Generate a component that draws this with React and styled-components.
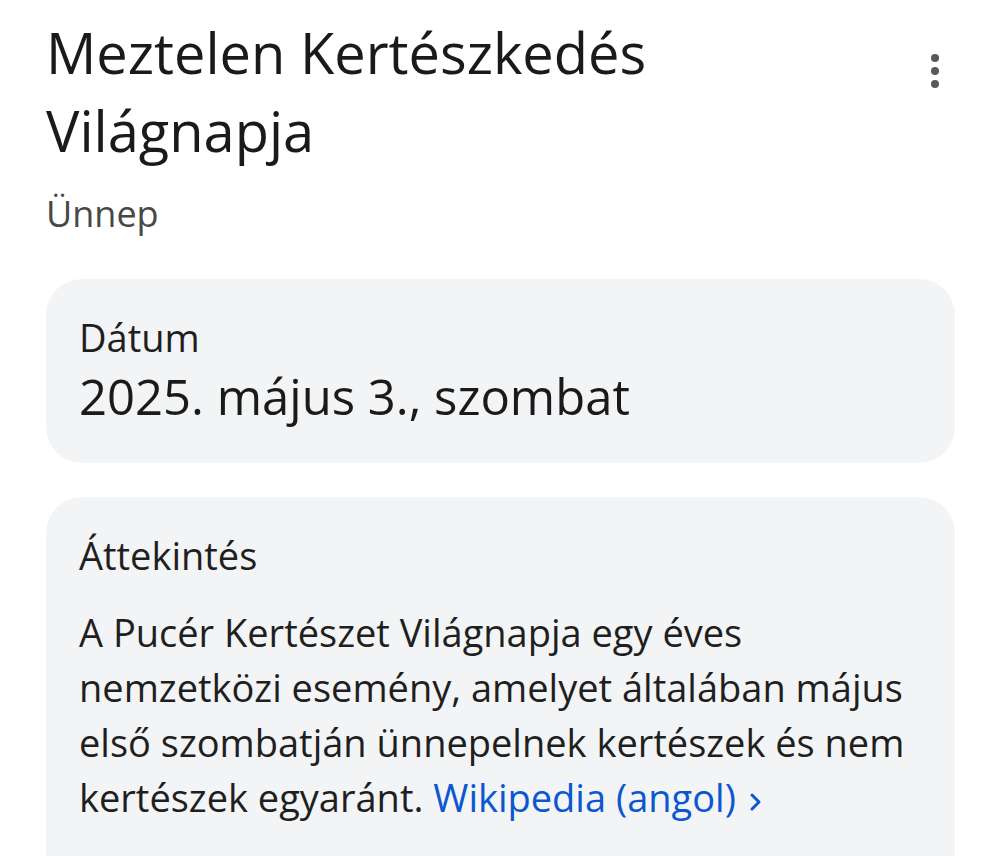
import styled, { createGlobalStyle } from 'styled-components';

const GlobalStyle = createGlobalStyle`
  html, body {
    margin: 0;
    padding: 0;
    background: #fff;
  }

  body {
    font-family: 'Open Sans', 'Roboto', sans-serif;
    color: #1f1f1f;
  }
`;

function Chevron() {
  return (
    <ChevronIcon width='14' height='22' viewBox='0 0 14 22' aria-hidden='true'>
      <path
        d='M4 4 L11 11 L4 18'
        fill='none'
        stroke='currentColor'
        strokeWidth='3'
        strokeLinecap='round'
        strokeLinejoin='round'
      />
    </ChevronIcon>
  );
}

function App() {
  return (
    <>
      <GlobalStyle />
      <Page>
        <Header>
          <TitleBlock>
            <Title>Meztelen Kertészkedés Világnapja</Title>
            <Subtitle>Ünnep</Subtitle>
          </TitleBlock>
          <MoreButton aria-label='Továbbiak'>
            <svg width='12' height='36' viewBox='0 0 12 36'>
              <circle cx='6' cy='5' r='4' fill='#56595e' />
              <circle cx='6' cy='18' r='4' fill='#56595e' />
              <circle cx='6' cy='31' r='4' fill='#56595e' />
            </svg>
          </MoreButton>
        </Header>

        <Card>
          <Label>Dátum</Label>
          <DateValue>2025. május 3., szombat</DateValue>
        </Card>

        <Card $grow>
          <Label>Áttekintés</Label>
          <Body>
            A Pucér Kertészet Világnapja egy éves nemzetközi esemény, amelyet
            általában május első szombatján ünnepelnek kertészek és nem
            kertészek egyaránt.{' '}
            <Link href='#'>
              Wikipedia (angol) <Chevron />
            </Link>
          </Body>
        </Card>
      </Page>
    </>
  );
}

const Page = styled.div`
  display: flex;
  flex-direction: column;
  gap: 34px;

  padding: 13px 45px 0 46px;
`;

const Header = styled.div`
  display: flex;
  justify-content: space-between;
  align-items: flex-start;
  margin-bottom: 7px;
`;

const TitleBlock = styled.div`
  display: flex;
  flex-direction: column;
`;

const Title = styled.h1`
  width: 700px;
  margin: 0;

  font-size: 56px;
  font-weight: 500;
  line-height: 78px;
  color: #1a1a1a;
`;

const Subtitle = styled.p`
  margin: 21px 0 0;

  font-size: 36px;
  font-weight: 400;
  line-height: 48px;
  color: #474747;
`;

const MoreButton = styled.button`
  display: flex;
  align-items: center;
  justify-content: center;

  width: 40px;
  height: 50px;
  margin-top: 33px;
  padding: 0;

  border: none;
  background: transparent;
`;

const Card = styled.section`
  display: flex;
  flex-direction: column;

  min-height: ${({ $grow }) => ($grow ? '400px' : '0')};
  padding: 34px 33px 37px;

  background-color: #f3f4f6;
  border-radius: 36px;
`;

const Label = styled.div`
  font-size: 38px;
  font-weight: 500;
  line-height: 48px;
  color: #1f1f1f;
`;

const DateValue = styled.div`
  margin-top: 5px;

  font-size: 49px;
  font-weight: 500;
  line-height: 60px;
  color: #1a1a1a;
`;

const Body = styled.p`
  max-width: 830px;
  margin: 26px 0 0;

  font-size: 38px;
  font-weight: 400;
  line-height: 55px;
  color: #1f1f1f;
`;

const Link = styled.a`
  font-weight: 500;
  color: #0b57d0;
  text-decoration: none;
  white-space: nowrap;
`;

const ChevronIcon = styled.svg`
  margin-left: 2px;
  vertical-align: -1px;
`;

export default App;
